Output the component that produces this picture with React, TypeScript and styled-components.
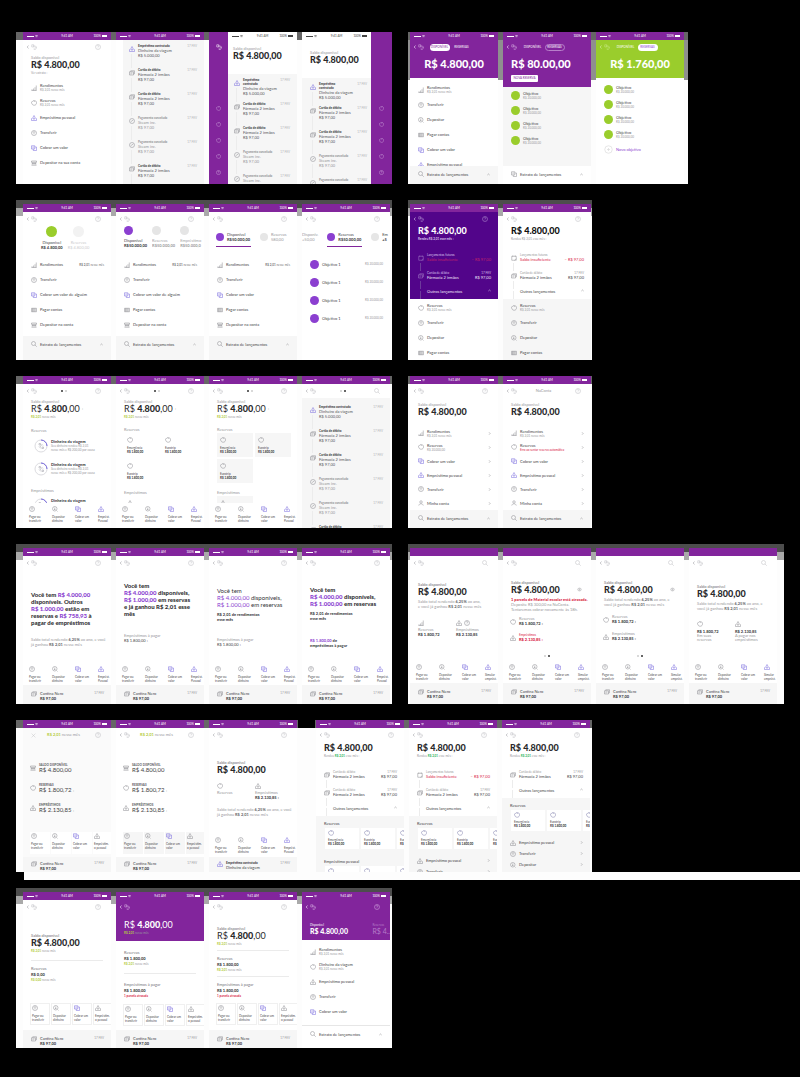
import React, { ReactNode } from 'react';
import styled, { createGlobalStyle, css } from 'styled-components';

const purple = '#82259c';
const deep = '#52058a';
const violet = '#8b3fd0';
const lime = '#9acd2c';
const olive = '#b4cc3c';
const red = '#d8213f';
const ink = '#444447';
const grey = '#98989c';
const mist = '#f6f6f6';

const GlobalStyle = createGlobalStyle`
  * { box-sizing: border-box; }
  body { margin: 0; background: #000; color: ${ink}; font-family: Lato, 'Open Sans', sans-serif; }
  button { all: unset; box-sizing: border-box; cursor: pointer; }
  h1, h2, p, ul { margin: 0; padding: 0; font-weight: inherit; list-style: none; }
`;

/* ---------- board ---------- */

const Board = styled.main`
  display: flex;
  flex-direction: column;
  gap: 16px;
  padding: 32px 16px 29px;
`;

const BoardRow = styled.section<{ $columns: string }>`
  display: grid;
  grid-template-columns: ${(p) => p.$columns};
`;

const plain = 'linear-gradient(#666 0 8px, #fdfdfd 8px)';
const tall = 'linear-gradient(#666 0 8px, #8f8f8f 8px 48px, #fdfdfd 48px)';
const offset = 'linear-gradient(#4d4d4d 0 8px, #a9a9a9 8px 16px, #fdfdfd 16px)';

const Group = styled.div<{ $height: number; $back?: string; $left?: number; $right?: number; $lift?: boolean }>`
  min-width: 0;
  display: flex;
  gap: 5px;
  height: ${(p) => p.$height}px;
  padding: ${(p) => (p.$lift ? 4 : 0)}px ${(p) => p.$right ?? 2}px 0 ${(p) => p.$left ?? 7}px;
  background: ${(p) => p.$back ?? plain};
  & + & { grid-column: 3; }
`;

const GroupBreak = styled.div`
  flex: 0 0 17px;
  margin: 0 -4px;
  border-top: 8px solid #000;
`;

const Band = styled.div`
  height: 8px;
  margin: -16px -16px -8px 8px;
  background: #fdfdfd;
`;

const Screen = styled.article<{ $back?: string; $grow?: number; $row?: boolean }>`
  flex: ${(p) => p.$grow ?? 88} 1 0px;
  min-width: 0;
  display: flex;
  flex-direction: ${(p) => (p.$row ? 'row' : 'column')};
  overflow: hidden;
  white-space: nowrap;
  background: ${(p) => p.$back ?? '#fff'};
`;

const Body = styled.div<{ $back?: string; $inset?: number }>`
  flex: 1 1 0px;
  min-height: 0;
  min-width: 0;
  overflow: hidden;
  display: flex;
  flex-direction: column;
  margin-left: ${(p) => p.$inset ?? 0}px;
  background: ${(p) => p.$back ?? 'transparent'};
`;

const Column = styled.div`
  flex: 1 1 0px;
  min-width: 0;
  display: flex;
  flex-direction: column;
`;

const Block = styled.div<{ $top?: number; $back?: string; $bottom?: number; $left?: number }>`
  flex: none;
  padding: ${(p) => p.$top ?? 0}px 0 ${(p) => p.$bottom ?? 0}px ${(p) => p.$left ?? 8}px;
  background: ${(p) => p.$back ?? 'transparent'};
`;

/* ---------- text ---------- */

interface TextProps { $tone?: string; $bold?: boolean }

const textStyle = css<TextProps>`
  display: block;
  font-weight: ${(p) => (p.$bold ? 900 : 400)};
`;

const Caption = styled.span<TextProps>`
  ${textStyle}
  font-size: 3px;
  line-height: 4px;
  color: ${(p) => p.$tone ?? grey};
`;

const Label = styled.span<TextProps>`
  ${textStyle}
  font-size: 4px;
  line-height: 5px;
  color: ${(p) => p.$tone ?? ink};
`;

const Overline = styled.span`
  display: block;
  font-size: 4px;
  line-height: 4px;
  color: ${grey};
`;

const Copy = styled.p<TextProps>`
  ${textStyle}
  font-size: 4px;
  line-height: 5px;
  color: ${(p) => p.$tone ?? grey};
  b { color: #66666a; }
`;

const Headline = styled.h2<{ $light?: boolean }>`
  font-size: 6px;
  line-height: 7px;
  font-weight: ${(p) => (p.$light ? 400 : 900)};
  color: #333336;
  em { font-style: normal; color: ${violet}; }
`;

const Amount = styled.h1<{ $size?: number; $tone?: string; $light?: boolean }>`
  font-size: ${(p) => p.$size ?? 9}px;
  line-height: ${(p) => (p.$size ?? 9) + 1}px;
  font-weight: ${(p) => (p.$light ? 400 : 900)};
  color: ${(p) => p.$tone ?? '#2a2a2c'};
  b { font-weight: 900; }
  small { font-size: 4px; vertical-align: 2px; color: ${grey}; }
`;

const Midsize = styled.span`
  display: block;
  font-size: 6px;
  line-height: 6px;
  color: #444;
  small { font-size: 4px; color: ${grey}; }
`;

const Green = styled.em<{ $tone?: string }>`
  font-style: normal;
  font-weight: 700;
  color: ${(p) => p.$tone ?? olive};
`;

/* ---------- icons ---------- */

const shapes: Record<string, ReactNode> = {
  bars: <path d="M4 22v-5M10 22v-8M16 22V9M21 22V2M2 22h20" />,
  pig: <path d="M8 3h8c5 1 6 5 6 9s-3 9-9 9-10-4-10-9c-2-1-2-3-1-4h2zM15 3l-2 4" />,
  loan: <path d="M8 9l4-7 4 7a5 5 0 1 1-8 0zM2 13v9h20v-9M12 11v5" />,
  send: <><circle cx="12" cy="12" r="10" /><path d="M12 17V7M8 10l4-4 4 4" /></>,
  deposit: <><circle cx="11" cy="11" r="9" /><path d="M11 6v9M8 12l3 3 3-3M19 19l3 3" /></>,
  copy: <path d="M2 3h13v13H2zM15 8h7v14H9v-6M6 8h5M6 12h4" />,
  barcode: <path d="M2 5v14M6 5v14M9 5v14M13 5v14M17 5v14M22 5v14M2 19h20M2 5h20" />,
  bank: <path d="M2 4h20v5H2zM2 21h20M4 14h16M5 9v10M12 9v10M19 9v10" />,
  card: <path d="M2 7h16v13H2zM7 7V3h15v12h-4M6 12h8M6 16h4" />,
  check: <><circle cx="12" cy="12" r="10" /><path d="M7 15l10-7" /></>,
  calendar: <path d="M3 5h18v16H3zM7 2v5M17 2v5M14 21l7-6" />,
  help: <><circle cx="12" cy="12" r="10" /><path d="M9 9c0-4 6-4 6 0 0 2-3 2-3 5M12 17v1" /></>,
  search: <><circle cx="10" cy="10" r="8" /><path d="M16 16l7 7" /></>,
  user: <><circle cx="12" cy="8" r="5" /><path d="M3 22c1-9 17-9 18 0" /></>,
  eye: <><path d="M1 12c5-9 17-9 22 0-5 9-17 9-22 0z" /><circle cx="12" cy="12" r="3" /></>,
  avatar: <path d="M3 3h8v9H3zM8 8h8a7 7 0 1 1-6 12M14 12l4 3-4 3" />,
  close: <path d="M3 3l18 18M21 3L3 21" />,
  plus: <><circle cx="12" cy="12" r="10" /><path d="M12 8v8M8 12h8" /></>,
  left: <path d="M15 3l-8 9 8 9" />,
  right: <path d="M9 3l8 9-8 9" />,
  up: <path d="M3 16l9-8 9 8" />,
  wifi: <path d="M1 8c6-6 16-6 22 0M6 13c4-3 8-3 12 0M12 19v1" />,
};

const Glyph = styled.svg<{ $size: number; $tone: string }>`
  display: block;
  flex: none;
  width: ${(p) => p.$size}px;
  height: ${(p) => p.$size}px;
  fill: none;
  stroke: ${(p) => p.$tone};
  stroke-width: ${(p) => (p.$size < 5 ? 5 : 2)};
`;

const Icon = ({ name, size = 6, tone = '#88888e' }: { name: string; size?: number; tone?: string }) => (
  <Glyph viewBox="0 0 24 24" $size={size} $tone={tone} aria-hidden="true">{shapes[name]}</Glyph>
);

const lilac = '#7466dc';
const hued = (name: string, on: boolean) => (on || name === 'copy' ? lilac : undefined);

/* ---------- status bar and navigation ---------- */

const StatusBar = styled.header<{ $back?: string; $tone?: string }>`
  flex: none;
  height: 8px;
  display: grid;
  grid-template-columns: 1fr auto 1fr;
  align-items: center;
  padding: 0 4px;
  font-size: 3px;
  line-height: 4px;
  background: ${(p) => p.$back ?? purple};
  color: ${(p) => p.$tone ?? '#fff'};
`;

const Signal = styled.span`
  display: flex;
  align-items: center;
  gap: 1px;
  &::before { content: ''; width: 7px; height: 1px; background: currentColor; }
`;

const Battery = styled.span`
  display: flex;
  justify-content: flex-end;
  align-items: center;
  gap: 1px;
  &::after { content: ''; width: 5px; height: 2px; background: currentColor; }
`;

const Status = ({ back, tone, blank }: { back?: string; tone?: string; blank?: boolean }) => (
  <StatusBar $back={back} $tone={tone}>
    {!blank && <><Signal><Icon name="wifi" size={3} tone="currentColor" /></Signal><span>9:41 AM</span><Battery>100%</Battery></>}
  </StatusBar>
);

const NavBar = styled.nav`
  flex: none;
  height: 14px;
  display: grid;
  grid-template-columns: 1fr auto 1fr;
  align-items: center;
  padding: 0 10px 0 3px;
`;

const NavButton = styled.button<{ $end?: boolean }>`
  display: flex;
  align-items: center;
  gap: 1px;
  justify-self: ${(p) => (p.$end ? 'end' : 'start')};
`;

const PageDots = styled.span`
  display: flex;
  justify-content: center;
  gap: 2px;
`;

const Dot = styled.i<{ $on?: boolean }>`
  width: 2px;
  height: 2px;
  border-radius: 50%;
  background: ${(p) => (p.$on ? '#333' : '#ccc')};
`;

interface NavProps { tone?: string; middle?: ReactNode; end?: string; close?: boolean }

const Nav = ({ tone = '#bdbdc1', middle, end = 'help', close }: NavProps) => (
  <NavBar>
    <NavButton aria-label={close ? 'Fechar' : 'Voltar'}>
      <Icon name={close ? 'none' : 'left'} size={4} tone={tone} />
      <Icon name={close ? 'close' : 'avatar'} size={close ? 5 : 6} tone={tone} />
    </NavButton>
    <span>{middle}</span>
    <NavButton $end aria-label="Ajuda"><Icon name={end} tone={tone} /></NavButton>
  </NavBar>
);

const dots = (second: boolean) => <PageDots><Dot $on={!second} /><Dot $on={second} /></PageDots>;

/* ---------- balance ---------- */

const BalanceNote = styled.div` padding-top: 1px; `;

interface BalanceProps {
  top: number; label?: string; big?: boolean; value?: ReactNode; note?: ReactNode; tone?: string; light?: boolean;
}

const Balance = ({ top, label, big, value = 'R$ 4.800,00', note, tone, light }: BalanceProps) => (
  <Block $top={top}>
    {label && (big ? <Label $tone="#6c6c70">{label}</Label> : <Overline>{label}</Overline>)}
    <Amount $tone={tone} $light={light}>{value}</Amount>
    {note && <BalanceNote><Caption>{note}</Caption></BalanceNote>}
  </Block>
);

const mixed = <>R$ <b>4.800</b>,00</>;
const mixedMore = <>{mixed} <small>›</small></>;
const earned = (value = 'R$ 2,01') => <><Green>{value}</Green> nesse mês</>;

/* ---------- menu list ---------- */

const Menu = styled.ul<{ $top?: number }>`
  flex: none;
  padding: ${(p) => p.$top ?? 0}px 7px 0 8px;
`;

const MenuButton = styled.button<{ $height: number }>`
  width: 100%;
  height: ${(p) => p.$height}px;
  display: flex;
  align-items: center;
  gap: 3px;
`;

const MenuText = styled.span`
  flex: 1 1 0px;
  min-width: 0;
`;

interface Entry { icon: string; text: string; sub?: string; subTone?: string; aside?: ReactNode; hot?: boolean }

const e = (icon: string, text: string, sub?: string, subTone?: string): Entry => ({ icon, text, sub, subTone });

interface MenuProps { items: Entry[]; top?: number; pitch?: number; arrows?: boolean }

const MenuList = ({ items, top, pitch = 15, arrows }: MenuProps) => (
  <Menu $top={top}>
    {items.map((item) => (
      <li key={item.text}>
        <MenuButton $height={pitch}>
          <Icon name={item.icon} tone={hued(item.icon, !!item.hot)} />
          <MenuText>
            <Label>{item.text}</Label>
            {item.sub && <Caption $tone={item.subTone}>{item.sub}</Caption>}
          </MenuText>
          {item.aside && <Caption $tone="#77777b">{item.aside}</Caption>}
          {arrows && <Icon name="right" size={3} tone={grey} />}
        </MenuButton>
      </li>
    ))}
  </Menu>
);

const FooterBar = styled.footer<{ $height: number; $back?: string; $line?: boolean }>`
  flex: none;
  height: ${(p) => p.$height}px;
  padding: 0 8px;
  background: ${(p) => p.$back ?? mist};
  border-top: ${(p) => (p.$line ? '1px solid #e6e6e6' : 'none')};
`;

const Statement = ({ height, back, line, icon = 'search' }: { height: number; back?: string; line?: boolean; icon?: string }) => (
  <FooterBar $height={height} $back={back} $line={line}>
    <MenuButton $height={16}>
      <Icon name={icon} />
      <MenuText><Label>Extrato de lançamentos</Label></MenuText>
      <Icon name="up" size={3} tone={grey} />
    </MenuButton>
  </FooterBar>
);

/* ---------- transactions ---------- */

const Feed = styled.ul<{ $top?: number; $left?: number; $right?: number }>`
  flex: none;
  padding: ${(p) => p.$top ?? 4}px ${(p) => p.$right ?? 7}px 0 ${(p) => p.$left ?? 7}px;
`;

const FeedItem = styled.li<{ $height: number }>`
  height: ${(p) => p.$height}px;
  display: flex;
  align-items: flex-start;
  gap: 3px;
`;

const Track = styled.span<{ $line?: string }>`
  align-self: stretch;
  width: 7px;
  display: flex;
  flex-direction: column;
  align-items: center;
  gap: 2px;
  padding-top: 2px;
  &::after { content: ''; flex: 1; width: 1px; background: ${(p) => p.$line ?? '#ececec'}; }
`;

const FeedEnd = styled.span` text-align: right; `;

interface Tx { icon: string; title: ReactNode; name?: string; value?: string; faint?: boolean }

const loanTx: Tx = { icon: 'loan', title: 'Empréstimo contratado', name: 'Dinheiro da viagem', value: 'R$ 5.000,00' };
const loanTxWrap: Tx = { ...loanTx, title: <>Empréstimo<br />contratado</> };
const cardTx: Tx = { icon: 'card', title: 'Cartão de débito', name: 'Fármacia 2 irmãos', value: 'R$ 97,00' };
const steamTx: Tx = { icon: 'check', title: 'Pagamento cancelado', name: 'Steam inc.', value: 'R$ 97,00', faint: true };
const titleOnly = (tx: Tx): Tx => ({ icon: tx.icon, title: tx.title, faint: tx.faint });
const feed = [loanTx, cardTx, cardTx, steamTx, steamTx];

const Transactions = ({ items, ...rest }: { items: Tx[]; top?: number; left?: number; right?: number }) => (
  <Feed $top={rest.top} $left={rest.left} $right={rest.right}>
    {items.map((tx, i) => (
      <FeedItem key={i} $height={24}>
        <Track><Icon name={tx.icon} tone={hued(tx.icon, tx.icon === 'loan')} /></Track>
        <MenuText>
          <Caption $bold $tone={tx.faint ? grey : ink}>{tx.title}</Caption>
          {tx.name && <Label $tone={tx.faint ? grey : '#55555a'}>{tx.name}</Label>}
          {tx.value && <Label $tone={tx.faint ? grey : '#55555a'}>{tx.value}</Label>}
        </MenuText>
        <Caption $tone="#b0b0b4">17 FEV</Caption>
      </FeedItem>
    ))}
  </Feed>
);

const RecentFeed = ({ alert, count = 2, dark }: { alert?: boolean; count?: number; dark?: boolean }) => {
  const soft = dark ? '#d9c4ec' : grey;
  const main = dark ? '#f0e6f8' : ink;
  const line = dark ? '#6d3a9c' : undefined;
  const alarm = dark ? '#c0236c' : red;
  return (
    <Feed $top={12}>
      {Array.from({ length: count }, (_, i) => {
        const late = alert && i === 0;
        return (
          <FeedItem key={i} $height={18}>
            <Track $line={line}><Icon name={late ? 'calendar' : 'card'} tone={dark ? '#a57fc8' : undefined} /></Track>
            <MenuText>
              <Caption $tone={soft}>{late ? 'Lançamentos futuros' : 'Cartão de débito'}</Caption>
              <Label $tone={late ? alarm : main}>{late ? 'Saldo insuficiente' : 'Fármacia 2 irmãos'}</Label>
            </MenuText>
            <FeedEnd>
              <Caption $tone={soft}>{late ? '\u00a0' : '17 FEV'}</Caption>
              <Label $tone={late ? alarm : main}>{late ? '– R$ 97,00' : 'R$ 97,00'}</Label>
            </FeedEnd>
          </FeedItem>
        );
      })}
      <FeedItem $height={10}>
        <Track $line={line} />
        <MenuText><Label $tone={main}>Outros lançamentos</Label></MenuText>
        <Icon name="up" size={3} tone={soft} />
      </FeedItem>
    </Feed>
  );
};

/* ---------- quick actions and the transaction peek ---------- */

const ActionBar = styled.div<{ $height: number; $cards?: boolean }>`
  flex: none;
  height: ${(p) => p.$height}px;
  display: flex;
  align-items: flex-start;
  gap: ${(p) => (p.$cards ? 1 : 3)}px;
  padding-left: ${(p) => (p.$cards ? 7 : 5)}px;
  overflow: hidden;
`;

const ActionButton = styled.button<{ $card?: string; $line?: boolean }>`
  flex: none;
  width: 20px;
  height: ${(p) => (p.$card ? 22 : 20)}px;
  padding: ${(p) => (p.$card ? 1 : 3)}px 0 0 1px;
  display: flex;
  flex-direction: column;
  gap: 3px;
  background: ${(p) => p.$card ?? 'transparent'};
  border: ${(p) => (p.$line ? '1px solid #f0f0f0' : 'none')};
`;

const Peek = styled.div<{ $height: number }>`
  flex: none;
  height: ${(p) => p.$height}px;
  padding: ${(p) => (p.$height < 16 ? 4 : 6)}px 7px 0 8px;
  display: flex;
  align-items: flex-start;
  gap: 3px;
  overflow: hidden;
  background: ${mist};
`;

const actions: [string, string, string][] = [
  ['send', 'Pagar ou', 'transferir'],
  ['deposit', 'Depositar', 'dinheiro'],
  ['copy', 'Cobrar um', 'valor'],
  ['loan', 'Emprést.', 'Pessoal'],
];

interface ActionsProps { height?: number; card?: string; line?: boolean; last?: [string, string] }

const Actions = ({ height = 22, card, line, last }: ActionsProps) => (
  <ActionBar $height={height} $cards={!!card}>
    {actions.map(([icon, first, second], i) => (
      <ActionButton key={icon} $card={card} $line={line}>
        <Icon name={icon} tone={hued(icon, icon === 'loan' && !card)} />
        <span>
          <Caption $tone="#4a4a4e">{i === 3 && last ? last[0] : first}</Caption>
          <Caption $tone="#4a4a4e">{i === 3 && last ? last[1] : second}</Caption>
        </span>
      </ActionButton>
    ))}
  </ActionBar>
);

const CantinaPeek = ({ height, loan }: { height: number; loan?: boolean }) => (
  <Peek $height={height}>
    <Icon name={loan ? 'loan' : 'card'} tone={hued('', !!loan)} />
    <MenuText>
      {loan ? <Caption $bold $tone={ink}>Empréstimo contratado</Caption> : <Label>Cantina Nero</Label>}
      <Label $bold={!loan}>{loan ? 'Dinheiro da viagem' : 'R$ 97,00'}</Label>
    </MenuText>
    <Caption>17 FEV</Caption>
  </Peek>
);

/* ---------- tiles ---------- */

const TileGrid = styled.div<{ $top: number }>`
  flex: none;
  display: grid;
  grid-template-columns: 36px 36px;
  gap: 2px;
  padding: ${(p) => p.$top}px 0 0 8px;
`;

const Tile = styled.div<{ $back?: string }>`
  flex: none;
  width: 36px;
  height: 24px;
  padding: 4px 0 0 3px;
  display: flex;
  flex-direction: column;
  gap: 3px;
  background: ${(p) => p.$back ?? 'transparent'};
`;

const CardStrip = styled.div`
  flex: none;
  display: flex;
  gap: 2px;
  padding: 2px 0 0 9px;
  overflow: hidden;
`;

const ReserveCard = styled.div`
  flex: none;
  width: 34px;
  height: 21px;
  padding: 2px 0 0 3px;
  display: flex;
  flex-direction: column;
  gap: 2px;
  background: #fff;
`;

const names = ['Emergência', 'Eurotrip', 'Eurotrip'];

const Tiles = ({ back }: { back?: string }) => (
  <>
    <TileGrid $top={1}>
      {names.map((name, i) => (
        <Tile key={i} $back={back}>
          <Icon name="pig" />
          <span><Caption $tone={ink}>{name}</Caption><Caption $tone={ink} $bold>R$ 1.800,00</Caption></span>
        </Tile>
      ))}
    </TileGrid>
    <Block $top={7}><Label $tone={grey}>Empréstimos</Label></Block>
    <TileGrid $top={1}><Tile $back={back}><Icon name="loan" /></Tile></TileGrid>
  </>
);

const ReserveCards = ({ brief }: { brief?: boolean }) => (
  <CardStrip>
    {names.map((name, i) => (
      <ReserveCard key={i}>
        <Icon name="pig" tone="#7a7aa8" />
        {!brief && <span><Caption $tone={ink}>{name}</Caption><Caption $tone={ink} $bold>R$ 1.800,00</Caption></span>}
      </ReserveCard>
    ))}
  </CardStrip>
);

/* ---------- goals with progress ring ---------- */

const GoalRow = styled.div`
  height: 23px;
  display: flex;
  align-items: flex-start;
  gap: 3px;
  padding-left: 3px;
`;

const Goal = ({ brief }: { brief?: boolean }) => (
  <GoalRow>
    <Glyph viewBox="0 0 28 28" $size={14} $tone="#dcdce0" aria-hidden="true">
      <circle cx="14" cy="14" r="12" />
      <path d="M14 2a12 12 0 0 1 12 12" stroke={lilac} />
      <path d="M10 9h3v3h-3zM15 10l3 3M10 15l4 4M16 16h3v3h-3zM15 12l-3 4" stroke="#9a9aa4" strokeWidth="1" />
    </Glyph>
    <span>
      <Label $bold>Dinheiro da viagem</Label>
      {!brief && <Caption>Seu dinheiro rendeu R$ 2,01</Caption>}
      {!brief && <Caption>nesse mês e R$ 200,00 por causa</Caption>}
    </span>
  </GoalRow>
);

/* ---------- coloured discs ---------- */

const Disc = styled.i<{ $size?: number; $tone: string }>`
  flex: none;
  display: block;
  width: ${(p) => p.$size ?? 9}px;
  height: ${(p) => p.$size ?? 9}px;
  border-radius: 50%;
  background: ${(p) => p.$tone};
`;

const ObjectiveList = ({ tone, pitch = 15, top, split }: { tone: string; pitch?: number; top: number; split?: boolean }) => (
  <Menu $top={top}>
    {[0, 1, 2, 3].map((i) => (
      <li key={i}>
        <MenuButton $height={pitch}>
          <Disc $tone={tone} />
          <MenuText>
            <Label>{split ? 'Objetivo 1' : 'Objetivo'}</Label>
            {!split && <Caption>R$ 20.000,00</Caption>}
          </MenuText>
          {split && <Caption>R$ 20.000,00</Caption>}
        </MenuButton>
      </li>
    ))}
  </Menu>
);

const AccountTabs = styled.div<{ $top: number; $gap: number; $left: number }>`
  flex: none;
  display: flex;
  gap: ${(p) => p.$gap}px;
  padding: ${(p) => p.$top}px 0 0 ${(p) => p.$left}px;
`;

const AccountTab = styled.button<{ $center?: boolean; $off?: boolean }>`
  flex: none;
  display: flex;
  flex-direction: column;
  gap: 3px;
  align-items: ${(p) => (p.$center ? 'center' : 'flex-start')};
  text-align: ${(p) => (p.$center ? 'center' : 'left')};
  opacity: ${(p) => (p.$off ? 0.5 : 1)};
`;

const SideTab = styled.button<{ $on?: boolean }>`
  flex: none;
  width: 35px;
  display: flex;
  align-items: center;
  gap: 3px;
  padding-bottom: 4px;
  border-bottom: 1px solid ${(p) => (p.$on ? purple : 'transparent')};
`;

/* ---------- header tabs ---------- */

const PillRow = styled.div`
  display: flex;
  align-items: center;
  gap: 2px;
`;

const Pill = styled.button<{ $fill?: string; $tone?: string; $line?: boolean }>`
  width: 20px;
  height: 7px;
  border-radius: 4px;
  text-align: center;
  font-size: 3px;
  line-height: ${(p) => (p.$line ? 5 : 7)}px;
  background: ${(p) => p.$fill ?? 'transparent'};
  color: ${(p) => p.$tone ?? '#fff'};
  border: ${(p) => (p.$line ? '1px solid #b77fca' : 'none')};
`;

const WhiteButton = styled.button`
  width: 27px;
  height: 7px;
  margin-top: 5px;
  border-radius: 1px;
  background: #fff;
  color: ${purple};
  font-size: 3px;
  line-height: 7px;
  text-align: center;
  display: block;
`;

const Hero = styled.div<{ $center?: boolean; $bottom: number }>`
  padding: 4px 8px ${(p) => p.$bottom}px;
  text-align: ${(p) => (p.$center ? 'center' : 'left')};
`;

const pills = (second: boolean, tone: string, line?: boolean) => (
  <PillRow>
    <Pill $fill={second ? undefined : '#fff'} $tone={second ? '#fff' : tone}>DISPONÍVEL</Pill>
    <Pill $fill={second && !line ? '#fff' : undefined} $tone={second && !line ? tone : '#fff'} $line={line}>RESERVAS</Pill>
  </PillRow>
);

const Rail = styled.div<{ $width: number }>`
  flex: 0 0 ${(p) => p.$width}px;
  display: flex;
  flex-direction: column;
  align-items: center;
  gap: 11px;
  padding-top: 12px;
  background: ${purple};
`;

const RailGap = styled.div` flex: 0 0 34px; `;

const rail = (width: number, lead: boolean) => (
  <Rail $width={width}>
    <Icon name={lead ? 'avatar' : 'none'} tone="#fff" />
    <RailGap />
    {[0, 1, 2, 3].map((i) => <Icon key={i} name="pig" size={5} tone="#d9b3e4" />)}
    <Icon name="help" size={5} tone="#d9b3e4" />
  </Rail>
);

/* ---------- facts (icon, caption, value) ---------- */

const FactPair = styled.div<{ $top: number }>`
  flex: none;
  display: grid;
  grid-template-columns: 38px 38px;
  padding: ${(p) => p.$top}px 0 0 8px;
`;

const Fact = styled.div`
  display: flex;
  flex-direction: column;
  gap: 2px;
`;

const FactList = styled.div<{ $top: number }>`
  flex: none;
  padding: ${(p) => p.$top}px 0 0 7px;
`;

const FactRow = styled.div<{ $height: number }>`
  height: ${(p) => p.$height}px;
  display: flex;
  align-items: flex-start;
  gap: 3px;
  & > svg { margin-top: 2px; }
`;

const FloatDots = styled.div`
  margin-top: auto;
  padding-bottom: 4px;
`;

const Overlay = styled.div`
  display: flex;
  justify-content: space-between;
  align-items: flex-end;
  padding-right: 9px;
  & > svg { margin-bottom: 3px; }
`;

const Facts = ({ top, pitch, late }: { top: number; pitch: number; late?: boolean }) => (
  <FactList $top={top}>
    <FactRow $height={pitch}>
      <Icon name="pig" />
      <span><Overline>Reservas</Overline><Label $bold>R$ 1.800,72 ›</Label></span>
    </FactRow>
    <FactRow $height={pitch}>
      <Icon name="loan" />
      <span>
        {late ? <Caption $tone={red}>Empréstimos</Caption> : <Overline>Empréstimos</Overline>}
        <Label $bold $tone={late ? red : undefined}>R$ 2.130,85 ›</Label>
      </span>
    </FactRow>
  </FactList>
);

const BigFacts = () => (
  <FactList $top={21}>
    {[['bank', 'SALDO DISPONÍVEL', 'R$ 4.800,00', ''], ['pig', 'RESERVAS', 'R$ 1.800,72', '›'], ['loan', 'EMPRÉSTIMOS', 'R$ 2.130,85', '›']].map(([icon, name, value, more]) => (
      <FactRow key={name} $height={20}>
        <Icon name={icon} />
        <span><Caption $bold $tone="#66666a">{name}</Caption><Midsize>{value} <small>{more}</small></Midsize></span>
      </FactRow>
    ))}
  </FactList>
);

/* ---------- summaries with dividers ---------- */

const SummaryBox = styled.div<{ $top: number }>`
  flex: none;
  display: flex;
  flex-direction: column;
  gap: 1px;
  padding: ${(p) => p.$top}px 0 0 8px;
`;

const Divider = styled.hr<{ $top: number }>`
  flex: none;
  height: 1px;
  width: 72px;
  margin: ${(p) => p.$top}px 0 0 8px;
  border: 0;
  background: #ebebeb;
`;

const Summary = ({ top, title, value, note }: { top: number; title: string; value: string; note: ReactNode }) => (
  <SummaryBox $top={top}>
    <Label $tone="#77777b">{title}</Label>
    <Label $bold>{value}</Label>
    <Caption>{note}</Caption>
  </SummaryBox>
);

const lateNote = <Green $tone={red}>1 parcela atrasada</Green>;

/* ---------- rows of the board ---------- */

const rend = e('bars', 'Rendimentos', 'R$ 2,01 nesse mês');
const reserve = e('pig', 'Reservas', 'R$ 2,01 nesse mês');
const loan: Entry = { ...e('loan', 'Empréstimo pessoal'), hot: true };
const transfer = e('send', 'Transferir');
const charge = e('copy', 'Cobrar um valor');
const deposit = e('deposit', 'Depositar');
const pay = e('barcode', 'Pagar contas');
const aside: Entry = { icon: 'bars', text: 'Rendimentos', aside: <><b>R$ 2,01</b> nesse mês</> };

const RowOne = () => (
  <BoardRow $columns="376fr 16px 280fr 96fr">
    <Group $height={152} $right={0}>
      <Screen>
        <Status />
        <Nav />
        <Body>
          <Balance top={2} label="Saldo disponível" note="Ver extrato ›" />
          <MenuList top={5} items={[rend, reserve, loan, transfer, charge, e('bank', 'Depositar na sua conta')]} />
        </Body>
      </Screen>
      <Screen>
        <Status />
        <Body $back={mist} $inset={7}><Transactions items={[...feed, cardTx]} left={5} /></Body>
      </Screen>
      <Screen $row>
        {rail(19, true)}
        <Column>
          <Status back="#fff" tone="#444" />
          <Block $top={7} $bottom={13} $left={5}><Overline>Saldo disponível</Overline><Amount>R$ 4.800,00</Amount></Block>
          <Body $back={mist}>
            <Transactions items={[loanTxWrap, cardTx, cardTx, steamTx, { ...steamTx, value: undefined }]} left={5} />
          </Body>
        </Column>
      </Screen>
      <Screen $row $grow={90}>
        <Column>
          <Status back="#fff" tone="#444" />
          <Block $top={11} $bottom={13}><Overline>Saldo disponível</Overline><Amount>R$ 4.800,00</Amount></Block>
          <Body $back={mist}>
            <Transactions items={[loanTxWrap, cardTx, cardTx, steamTx, titleOnly(steamTx)]} right={4} />
          </Body>
        </Column>
        {rail(21, false)}
      </Screen>
    </Group>
    <Group $height={152} $left={2} $right={4} $back={tall}>
      <Screen>
        <Status />
        <Block $back={purple} $left={0}>
          <Nav tone="#d9b3e4" end="none" middle={pills(false, purple)} />
          <Hero $center $bottom={8}><Amount $size={11} $tone="#fff">R$ 4.800,00</Amount></Hero>
        </Block>
        <Body><MenuList top={4} items={[rend, transfer, deposit, pay, charge, loan]} /></Body>
        <Statement height={18} />
      </Screen>
      <Screen>
        <Status />
        <Block $back={purple} $left={0}>
          <Nav tone="#d9b3e4" end="none" middle={pills(true, purple, true)} />
          <Hero $bottom={5}><Amount $size={11} $tone="#fff">R$ 80.00,00</Amount><WhiteButton>NOVA RESERVA</WhiteButton></Hero>
        </Block>
        <Body $back={mist}><ObjectiveList tone={lime} top={1} /></Body>
        <Statement height={18} back="#fff" icon="copy" />
      </Screen>
      <Screen>
        <Status />
        <Block $back={lime} $left={0}>
          <Nav tone="#c9e88a" end="none" middle={pills(true, violet)} />
          <Hero $center $bottom={8}><Amount $size={11} $tone="#fff">R$ 1.760,00</Amount></Hero>
        </Block>
        <Body>
          <ObjectiveList tone={lime} top={4} />
          <Menu><li><MenuButton $height={15}><Icon name="plus" size={9} tone="#ddd" /><Label $tone={violet}>Novo objetivo</Label></MenuButton></li></Menu>
        </Body>
      </Screen>
    </Group>
  </BoardRow>
);

const chargeSomeone = e('copy', 'Cobrar um valor de alguém');
const toAccount = e('bank', 'Depositar na conta');

const RowTwo = () => (
  <BoardRow $columns="376fr 16px 184fr 192fr">
    <Group $height={160} $back={offset} $lift>
      <Screen>
        <Status />
        <Nav />
        <Body>
          <AccountTabs $top={0} $gap={5} $left={18}>
            <AccountTab $center><Disc $size={11} $tone={lime} /><span><Label>Disponível</Label><Label $bold>R$ 4.800,00</Label></span></AccountTab>
            <AccountTab $center $off><Disc $size={11} $tone="#e6e6e6" /><span><Label $tone={grey}>Reservas</Label><Label $tone={grey}>R$ 4.800,00</Label></span></AccountTab>
          </AccountTabs>
          <MenuList top={7} items={[aside, transfer, chargeSomeone, pay, toAccount]} />
        </Body>
        <Statement height={24} />
      </Screen>
      <Screen>
        <Status />
        <Nav />
        <Body>
          <AccountTabs $top={0} $gap={5} $left={8}>
            <AccountTab><Disc $tone={violet} /><span><Label>Disponível</Label><Label $bold>R$50.000,00</Label></span></AccountTab>
            <AccountTab $off><Disc $tone="#ccc" /><span><Label>Reservas</Label><Label $bold>R$50.000,00</Label></span></AccountTab>
            <AccountTab $off><Disc $tone="#ccc" /><span><Label>Empréstimo</Label><Label $bold>R$50.000,0</Label></span></AccountTab>
          </AccountTabs>
          <MenuList top={9} items={[aside, transfer, chargeSomeone, pay, toAccount]} />
        </Body>
        <Statement height={24} />
      </Screen>
      <Screen>
        <Status />
        <Nav />
        <Body>
          <AccountTabs $top={6} $gap={9} $left={7}>
            <SideTab $on><Disc $size={8} $tone={violet} /><span><Label>Disponível</Label><Label $bold>R$50.000,00</Label></span></SideTab>
            <SideTab><Disc $size={8} $tone="#e6e6e6" /><span><Label $tone={grey}>Reservas</Label><Label $tone={grey}>580,00</Label></span></SideTab>
          </AccountTabs>
          <MenuList top={10} items={[aside, transfer, charge, pay, toAccount]} />
        </Body>
        <Statement height={24} />
      </Screen>
      <Screen>
        <Status />
        <Nav />
        <Body>
          <AccountTabs $top={6} $gap={9} $left={0}>
            <span><Label $tone={grey}>Disponív.</Label><Label $tone={grey}>+50,00</Label></span>
            <SideTab $on><Disc $size={8} $tone={violet} /><span><Label>Reservas</Label><Label $bold>R$50.000,00</Label></span></SideTab>
            <SideTab><Disc $size={8} $tone="#e6e6e6" /><span><Label>Em</Label><Label $bold>+5</Label></span></SideTab>
          </AccountTabs>
          <ObjectiveList split tone={violet} pitch={18} top={8} />
        </Body>
      </Screen>
    </Group>
    <Group $height={160} $left={2} $right={1} $back={offset} $lift>
      <Screen>
        <Status />
        <Block $back={deep} $left={0}>
          <Nav tone="#b99ad6" />
          <Balance top={0} tone="#fff" note={<Green $tone="#d9c4ec">Rendeu R$ 2,01 esse mês ›</Green>} />
          <RecentFeed alert dark />
        </Block>
        <Body><MenuList top={1} items={[reserve, transfer, deposit, pay]} /></Body>
      </Screen>
      <Screen>
        <Status />
        <Nav />
        <Balance top={0} tone="#111" note="Rendeu R$ 2,01 esse mês ›" />
        <RecentFeed alert />
        <Body $back={mist}><MenuList top={1} items={[reserve, transfer, deposit, pay]} /></Body>
      </Screen>
    </Group>
  </BoardRow>
);

const account = e('user', 'Minha conta');

const RowThree = () => (
  <BoardRow $columns="376fr 16px 184fr 192fr">
    <Group $height={152}>
      <Screen>
        <Status />
        <Nav middle={dots(false)} />
        <Body>
          <Balance top={2} label="Saldo disponível" value={mixedMore} light note={earned()} />
          <Block $top={9} $bottom={6}><Label $tone={grey}>Reservas</Label></Block>
          <Block><Goal /><Goal /></Block>
          <Block $top={3} $bottom={5}><Label $tone={grey}>Empréstimos</Label></Block>
          <Block><Goal brief /></Block>
        </Body>
        <Actions height={25} />
      </Screen>
      <Screen>
        <Status />
        <Nav middle={dots(false)} />
        <Body>
          <Balance top={2} label="Saldo disponível" value={mixedMore} light note={earned()} />
          <Block $top={8}><Label $tone={grey}>Reservas</Label></Block>
          <Tiles />
        </Body>
        <Actions height={25} />
      </Screen>
      <Screen>
        <Status />
        <Nav middle={dots(false)} />
        <Body>
          <Balance top={2} label="Saldo disponível" value={mixedMore} light note={earned()} />
          <Block $top={8}><Label $tone={grey}>Reservas</Label></Block>
          <Tiles back={mist} />
        </Body>
        <Actions height={25} />
      </Screen>
      <Screen>
        <Status />
        <Nav end="search" middle={dots(true)} />
        <Body $back={mist}><Transactions items={[...feed, titleOnly(cardTx)]} top={7} /></Body>
      </Screen>
    </Group>
    <Group $height={152} $left={2} $right={1}>
      <Screen>
        <Status />
        <Nav />
        <Body>
          <Balance top={5} label="Saldo disponível" />
          <MenuList top={9} pitch={14} arrows items={[rend, e('pig', 'Reservas', 'R$ 20.000,00'), charge, loan, transfer, account]} />
        </Body>
        <Statement height={18} />
      </Screen>
      <Screen>
        <Status />
        <Nav middle={<Overline>NuConta</Overline>} />
        <Body>
          <Balance top={5} label="Saldo disponível" />
          <MenuList top={9} pitch={14} arrows items={[rend, e('pig', 'Reservas', 'Erro ao sentar reserva automática', red), charge, loan, transfer, account]} />
        </Body>
        <Statement height={18} />
      </Screen>
    </Group>
  </BoardRow>
);

const earnings = (
  <>Saldo total rendendo <b>6,25%</b> ao ano, e você<br />já ganhou <b>R$ 2,01</b> nesse mês</>
);
const earningsShort = (
  <>Saldo total rendendo <b>6,25%</b> ao ano, e<br />você já ganhou <b>R$ 2,01</b> nesse mês</>
);
const earningsNarrow = (
  <>Saldo total rendendo <b>6,25%</b> ao ano,<br />e você já ganhou <b>R$ 2,01</b> nesse mês</>
);
const simulate: [string, string] = ['Simular', 'emprést.'];

const RowFour = () => (
  <BoardRow $columns="376fr 16px 376fr">
    <Group $height={160} $back={offset} $lift>
      <Screen>
        <Status />
        <Nav />
        <Body>
          <Block $top={21}>
            <Headline>Você tem <em>R$ 4.000,00</em><br />disponíveis. Outros<br /><em>R$ 1.000,00</em> estão em<br />reservas e <em>R$ 758,93</em> à<br />pagar de empréstimos</Headline>
          </Block>
          <Block $top={11}><Copy>{earnings}</Copy></Block>
        </Body>
        <Actions />
        <CantinaPeek height={19} />
      </Screen>
      <Screen>
        <Status />
        <Nav />
        <Body>
          <Block $top={12}>
            <Headline>Você tem<br /><em>R$ 4.000,00</em> disponíveis,<br /><em>R$ 1.000,00</em> em reservas<br />e já ganhou R$ 2,01 esse<br />mês</Headline>
          </Block>
          <Block $top={16}><Label $tone={grey}>Empréstimos à pagar</Label><Label>R$ 1.800,00 ›</Label></Block>
        </Body>
        <Actions />
        <CantinaPeek height={19} />
      </Screen>
      <Screen>
        <Status />
        <Nav />
        <Body>
          <Block $top={17}>
            <Headline $light>Você tem<br /><em>R$ 4.000,00</em> disponíveis,<br /><em>R$ 1.000,00</em> em reservas</Headline>
          </Block>
          <Block $top={4}><Label $bold>R$ 2,01 de rendimentos<br />esse mês</Label></Block>
          <Block $top={15}><Label $tone={grey}>Empréstimos à pagar</Label><Label>R$ 1.800,00 ›</Label></Block>
        </Body>
        <Actions />
        <CantinaPeek height={19} />
      </Screen>
      <Screen>
        <Status />
        <Nav />
        <Body>
          <Block $top={16}>
            <Headline>Você tem<br /><em>R$ 4.000,00</em> disponíveis,<br /><em>R$ 1.000,00</em> em reservas</Headline>
          </Block>
          <Block $top={4}><Label $bold>R$ 2,01 de rendimentos<br />esse mês</Label></Block>
          <Block $top={17}><Label $bold><Green $tone={violet}>R$ 1.800,00</Green> de<br />empréstimos à pagar</Label></Block>
        </Body>
        <Actions />
        <CantinaPeek height={19} />
      </Screen>
    </Group>
    <Group $height={160} $left={2} $right={7} $back={offset} $lift>
      <Screen>
        <Status blank />
        <Nav end="search" />
        <Body>
          <Balance top={12} label="Saldo disponível" big />
          <Block $top={2}><Copy>{earningsNarrow}</Copy></Block>
          <FactPair $top={11}>
            <Fact><Icon name="bars" /><span><Overline>Reservas</Overline><Label $bold>R$ 1.800,72</Label></span></Fact>
            <Fact><PillRow><Icon name="loan" /><Icon name="help" /></PillRow><span><Overline>Empréstimos</Overline><Label $bold>R$ 2.130,85</Label></span></Fact>
          </FactPair>
        </Body>
        <Actions last={simulate} />
        <CantinaPeek height={21} />
      </Screen>
      <Screen>
        <Status blank />
        <Nav end="search" />
        <Body>
          <Overlay><Balance top={10} label="Saldo disponível" big /><Icon name="eye" size={5} /></Overlay>
          <Block $top={2}>
            <Copy $bold $tone={red}>1 parcela de Material escolar está atrasada.</Copy>
            <Copy>Deposite R$ 300,00 na NuConta.<br />Tentaremos cobrar novamente às 18h.</Copy>
          </Block>
          <Facts top={5} pitch={16} late />
          <FloatDots>{dots(true)}</FloatDots>
        </Body>
        <Actions last={simulate} />
        <CantinaPeek height={21} />
      </Screen>
      <Screen>
        <Status blank />
        <Nav end="search" />
        <Body>
          <Overlay><Balance top={10} label="Saldo disponível" big /><Icon name="eye" size={5} /></Overlay>
          <Block $top={2}><Copy>{earningsShort}</Copy></Block>
          <Facts top={8} pitch={17} />
          <FloatDots>{dots(true)}</FloatDots>
        </Body>
        <Actions last={simulate} />
        <CantinaPeek height={21} />
      </Screen>
      <Screen>
        <Status blank />
        <Nav end="search" />
        <Body>
          <Balance top={14} label="Saldo disponível" big />
          <Block $top={2}><Copy>{earningsShort}</Copy></Block>
          <FactPair $top={10}>
            <Fact><Icon name="pig" /><span><Label $bold>R$ 1.800,72</Label><Overline>Em suas<br />reservas</Overline></span></Fact>
            <Fact><Icon name="loan" /><span><Label $bold>R$ 2.130,85</Label><Overline>A pagar nos<br />empréstimos</Overline></span></Fact>
          </FactPair>
        </Body>
        <Actions last={simulate} />
        <CantinaPeek height={21} />
      </Screen>
    </Group>
  </BoardRow>
);

const personal: [string, string] = ['Empréstim.', 'o pessoal'];
const green = <>Rendeu <Green $tone="#2fb45c">R$ 2,01</Green> esse mês ›</>;

const RowFive = () => (
  <BoardRow $columns="576fr 192fr">
    <Group $height={152} $right={2}>
      <Screen $back="#fafafa">
        <Status />
        <Nav close middle={<Overline>{earned()}</Overline>} />
        <Body><BigFacts /></Body>
        <Actions height={25} card="#fff" last={personal} />
        <CantinaPeek height={15} />
      </Screen>
      <Screen>
        <Status />
        <Nav middle={<Overline>{earned()}</Overline>} />
        <Body><BigFacts /></Body>
        <Actions height={25} card={mist} last={personal} />
        <CantinaPeek height={15} />
      </Screen>
      <Screen>
        <Status />
        <Nav />
        <Body>
          <Balance top={18} label="Saldo disponível" big />
          <FactPair $top={8}>
            <Fact><Icon name="pig" /><span><Overline>Reservas</Overline></span></Fact>
            <Fact><Icon name="loan" /><span><Overline>Empréstimos</Overline><Label $bold>R$ 2.130,85 ›</Label></span></Fact>
          </FactPair>
          <Block $top={7}><Copy>{earnings}</Copy></Block>
        </Body>
        <Actions height={23} />
        <CantinaPeek height={15} loan />
      </Screen>
      <GroupBreak />
      <Screen>
        <Status />
        <Nav />
        <Balance top={1} note={green} />
        <RecentFeed />
        <Body $back={mist}>
          <Block $top={5}><Label>Reservas</Label></Block>
          <ReserveCards />
          <Block $top={10}><Label>Empréstimo pessoal</Label></Block>
          <ReserveCards brief />
        </Body>
      </Screen>
      <Screen>
        <Status />
        <Nav />
        <Balance top={1} note={green} />
        <RecentFeed alert />
        <Body $back={mist}>
          <Block $top={5}><Label>Reservas</Label></Block>
          <ReserveCards />
          <MenuList top={6} pitch={11} arrows items={[e('loan', 'Empréstimo pessoal'), transfer]} />
        </Body>
      </Screen>
      <Screen>
        <Status />
        <Nav />
        <Balance top={1} note={green} />
        <RecentFeed count={1} />
        <Body $back={mist}>
          <Block $top={5}><Label>Reservas</Label></Block>
          <ReserveCards />
          <MenuList top={6} pitch={11} arrows items={[e('loan', 'Empréstimo pessoal'), transfer, deposit]} />
        </Body>
      </Screen>
    </Group>
  </BoardRow>
);

const HeroSplit = styled.div`
  display: flex;
  justify-content: space-between;
  padding: 9px 0 5px 8px;
`;

const RowSix = () => (
  <BoardRow $columns="376fr 392fr">
    <Group $height={160} $back={offset} $lift>
      <Screen>
        <Status />
        <Nav />
        <Body>
          <Balance top={19} label="Saldo disponível" big note={earned()} />
          <Divider $top={7} />
          <Summary top={5} title="Reservas" value="R$ 0,00" note={earned('R$ 0,00')} />
        </Body>
        <Actions height={27} card="#fff" line last={personal} />
        <CantinaPeek height={18} />
      </Screen>
      <Screen>
        <Status />
        <Block $back={purple} $left={0} $bottom={6}>
          <Nav tone="#d9b3e4" end="none" />
          <Balance top={6} value={mixed} light tone="#fff" note={earned()} />
        </Block>
        <Body>
          <Summary top={9} title="Reservas" value="R$ 1.800,00" note={earned()} />
          <Divider $top={7} />
          <Summary top={8} title="Empréstimos à pagar" value="R$ 1.800,00" note={lateNote} />
        </Body>
        <Actions height={26} card="#fff" line last={personal} />
        <CantinaPeek height={18} />
      </Screen>
      <Screen>
        <Status />
        <Nav />
        <Body>
          <Balance top={12} label="Saldo disponível" big value={mixed} light note={earned()} />
          <Divider $top={4} />
          <Summary top={5} title="Reservas" value="R$ 1.800,00" note={earned()} />
          <Divider $top={4} />
          <Summary top={5} title="Empréstimos à pagar" value="R$ 1.800,00" note={lateNote} />
        </Body>
        <Actions height={27} card="#fff" line last={personal} />
        <CantinaPeek height={18} />
      </Screen>
      <Screen>
        <Status />
        <Block $back={purple} $left={0}>
          <Nav tone="#d9b3e4" />
          <HeroSplit>
            <span><Caption $tone="#fff">Disponível</Caption><Amount $size={7} $tone="#fff">R$ 4.800,00</Amount></span>
            <span><Caption $tone="#b57cc8">Reservas</Caption><Amount $size={7} $light $tone="#b57cc8">R$ 4..</Amount></span>
          </HeroSplit>
        </Block>
        <Body><MenuList top={4} items={[rend, e('pig', 'Dinheiro da viagem', 'R$ 2,01 nesse mês'), e('loan', 'Empréstimo pessoal'), transfer, charge]} /></Body>
        <Statement height={23} back="#fff" line />
      </Screen>
    </Group>
  </BoardRow>
);

export default function App() {
  return (
    <>
      <GlobalStyle />
      <Board>
        <RowOne />
        <RowTwo />
        <RowThree />
        <RowFour />
        <RowFive />
        <Band />
        <RowSix />
      </Board>
    </>
  );
}
